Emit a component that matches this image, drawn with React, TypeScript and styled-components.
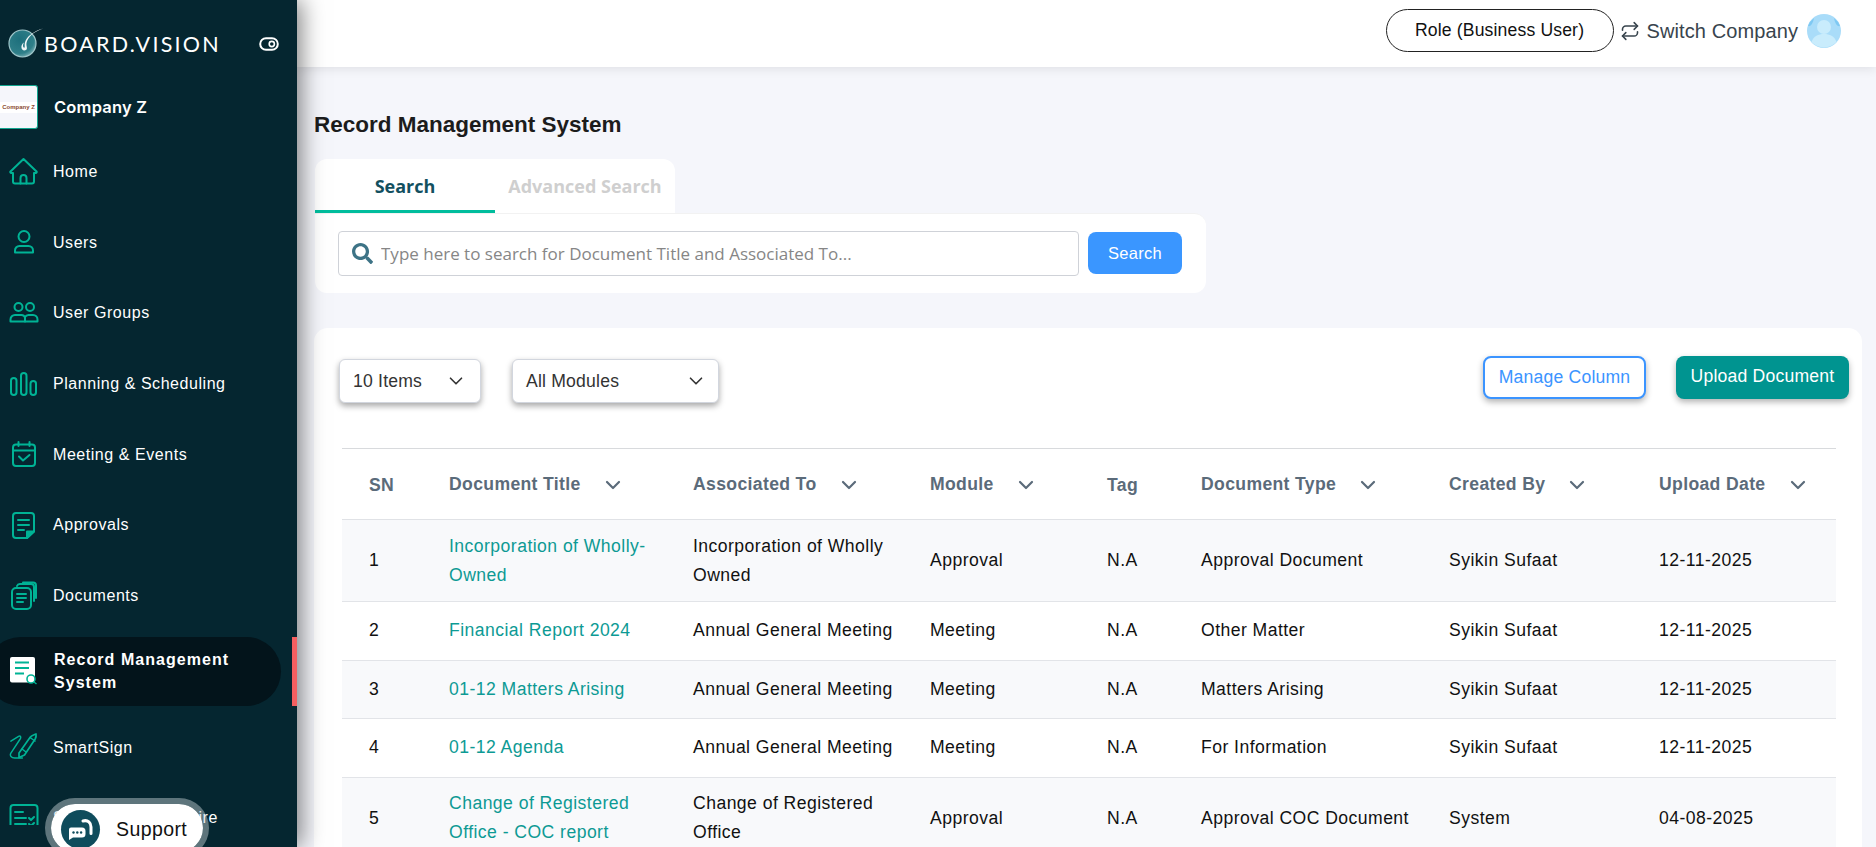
import React from "react";
import styled, { createGlobalStyle } from "styled-components";
import { ChevronDown, Repeat } from "lucide-react";
import { FaSearch } from "react-icons/fa";

const Global = createGlobalStyle`
  html, body { margin: 0; height: 100%; overflow: hidden; background: #f5f6fb; }
  * { box-sizing: border-box; }
  body { font-family: "Liberation Sans", Arial, sans-serif; }
`;

const Page = styled.div`
  display: flex;
  height: 100vh;
  overflow: hidden;
  position: relative;
`;

const Sidebar = styled.aside`
  flex: none;
  width: 297px;
  height: 100%;
  background: #052630;
  color: #fff;
  position: relative;
  z-index: 5;
  box-shadow: 4px 0 22px rgba(0, 0, 0, 0.5);
`;

const Brand = styled.div`
  height: 85px;
  display: flex;
  align-items: flex-start;
  padding: 26px 18px 0 7px;
`;

const BrandName = styled.span`
  font-family: "Lato", sans-serif;
  font-size: 21.5px;
  line-height: 36px;
  letter-spacing: 2.25px;
  margin-left: -1px;
  flex: 1;
`;

const ToggleBox = styled.span`
  display: flex;
  margin-top: 10px;
`;

const CompanyRow = styled.div`
  display: flex;
  align-items: center;
  height: 44px;
  margin-bottom: 7px;
`;

const CompanyLogo = styled.div`
  width: 38px;
  height: 44px;
  display: flex;
  align-items: center;
  background: #f5f6fb;
  border: 1px solid #11a58f;
  border-left: none;
  border-radius: 0 3px 3px 0;
`;

const CompanyLogoText = styled.span`
  display: block;
  width: 100%;
  background: #fff;
  color: #8c4a2f;
  font-size: 6px;
  font-weight: 700;
  line-height: 11px;
  text-align: center;
  white-space: nowrap;
`;

const CompanyName = styled.span`
  margin-left: 16px;
  font-family: "Inter", sans-serif;
  font-weight: 600;
  font-size: 16.5px;
  letter-spacing: 0.2px;
`;

const Nav = styled.nav`
  height: 689px;
  overflow: hidden;
`;

const NavItem = styled.div<{ $active?: boolean }>`
  display: flex;
  align-items: center;
  position: relative;
  height: ${(p) => (p.$active ? "69px" : "70.7px")};
  width: ${(p) => (p.$active ? "295px" : "100%")};
  margin: ${(p) => (p.$active ? "6px 0 6px -14px" : "0")};
  padding-left: ${(p) => (p.$active ? "23px" : "9px")};
  border-radius: ${(p) => (p.$active ? "35px" : "0")};
  background: ${(p) => (p.$active ? "#03141b" : "transparent")};
  ${(p) =>
    p.$active &&
    `&::after {
      content: "";
      position: absolute;
      left: 306px;
      top: 0;
      width: 5px;
      height: 100%;
      background: #f55f60;
    }`}
`;

const NavIcon = styled.span`
  flex: none;
  width: 30px;
  height: 30px;
  display: flex;
`;

const NavLabel = styled.span<{ $active?: boolean }>`
  margin-left: ${(p) => (p.$active ? "15px" : "14px")};
  font-size: 16px;
  line-height: 23px;
  letter-spacing: ${(p) => (p.$active ? "1.05px" : "0.55px")};
  font-weight: ${(p) => (p.$active ? 700 : 400)};
  width: ${(p) => (p.$active ? "200px" : "auto")};
  white-space: ${(p) => (p.$active ? "normal" : "nowrap")};
`;

const Support = styled.div`
  position: absolute;
  left: 45px;
  top: 798px;
  width: 164px;
  height: 60px;
  display: flex;
  align-items: flex-start;
  padding: 6px 0 0 10px;
  background: #fff;
  background-clip: padding-box;
  border: 6px solid rgba(205, 215, 218, 0.45);
  border-radius: 30px;
  z-index: 6;
`;

const SupportDot = styled.span`
  flex: none;
  width: 39px;
  height: 39px;
  border-radius: 50%;
  background: #0f4c5c;
  display: flex;
  align-items: center;
  justify-content: center;
`;

const SupportText = styled.span`
  margin-left: 16px;
  font-size: 19.5px;
  line-height: 39px;
  color: #111;
  letter-spacing: 0.4px;
`;

const Main = styled.main`
  flex: 1;
  min-width: 0;
  height: 100%;
  overflow: hidden;
  background: #f5f6fb;
`;

const TopBar = styled.header`
  height: 67px;
  background: #fff;
  box-shadow: 0 2px 10px rgba(0, 0, 0, 0.09);
  display: flex;
  align-items: flex-start;
  justify-content: flex-end;
  padding: 9px 35px 0 0;
`;

const RoleButton = styled.button`
  width: 228px;
  height: 43px;
  border: 1px solid #222;
  border-radius: 22px;
  background: #fff;
  color: #111;
  font: 17.6px "Liberation Sans", Arial, sans-serif;
  letter-spacing: 0.15px;
`;

const SwitchCompany = styled.div`
  display: flex;
  align-items: center;
  height: 44px;
  margin-left: 6px;
  color: #38444d;
  font-size: 20px;
`;

const SwitchText = styled.span`
  margin-left: 7px;
  margin-right: 9px;
  letter-spacing: 0.1px;
`;

const Content = styled.div`
  padding: 0 14px 0 17px;
`;

const Title = styled.h1`
  margin: 0;
  padding-top: 44px;
  height: 92px;
  font-size: 22.5px;
  line-height: 28px;
  font-weight: 700;
  color: #1c1c1c;
`;

const Tabs = styled.div`
  display: flex;
  width: 360px;
  height: 54px;
  margin-left: 1px;
  background: #fff;
  border-radius: 12px 12px 0 0;
`;

const Tab = styled.div<{ $active?: boolean }>`
  width: 180px;
  height: 54px;
  padding-top: 12px;
  font-family: "Open Sans", sans-serif;
  font-weight: 700;
  font-size: 18px;
  line-height: 30px;
  text-align: center;
  color: ${(p) => (p.$active ? "#13505f" : "#cfcfcf")};
  border-bottom: 3px solid ${(p) => (p.$active ? "#00bd9d" : "transparent")};
`;

const SearchCard = styled.div`
  width: 891px;
  height: 80px;
  margin-left: 1px;
  background: #fff;
  border-radius: 0 12px 12px 12px;
  border-top: 1px solid #f2f2f2;
  padding: 17px 24px 0 23px;
  display: flex;
  align-items: flex-start;
`;

const SearchField = styled.div`
  width: 741px;
  height: 45px;
  border: 1px solid #cfd2d8;
  border-radius: 4px;
  display: flex;
  align-items: center;
  padding-left: 13px;
  color: #3d7386;
`;

const SearchInput = styled.input`
  flex: 1;
  border: none;
  outline: none;
  background: transparent;
  margin-left: 6px;
  font: 17px "Open Sans", sans-serif;
  &::placeholder {
    color: #868686;
    opacity: 1;
  }
`;

const SearchButton = styled.button`
  width: 94px;
  height: 42px;
  margin: 1px 0 0 9px;
  border: none;
  border-radius: 8px;
  background: #3a96ff;
  color: #fff;
  font: 16.5px "Liberation Sans", Arial, sans-serif;
  letter-spacing: 0.3px;
`;

const TableCard = styled.section`
  margin-top: 35px;
  background: #fff;
  border-radius: 14px 14px 0 0;
  padding-left: 28px;
  padding-right: 26px;
  height: 600px;
`;

const Toolbar = styled.div`
  height: 120px;
  margin: 0 -13px 0 -3px;
  padding-top: 28px;
  display: flex;
  align-items: flex-start;
  justify-content: space-between;
`;

const ToolGroup = styled.div`
  display: flex;
  align-items: flex-start;
`;

const Select = styled.div<{ $width: number; $pr: number }>`
  width: ${(p) => p.$width}px;
  height: 44px;
  margin: 3px 31px 0 0;
  padding: 0 ${(p) => p.$pr}px 0 13px;
  display: flex;
  align-items: center;
  justify-content: space-between;
  background: #fff;
  border: 1px solid #d2d6de;
  border-radius: 6px;
  box-shadow: 0 3px 6px rgba(0, 0, 0, 0.35);
  color: #333;
  font-size: 17.6px;
  letter-spacing: 0.2px;
`;

const OutlineButton = styled.button`
  width: 163px;
  height: 43px;
  border: 2px solid #3b94ff;
  border-radius: 8px;
  background: #fff;
  color: #3b94ff;
  font: 17.6px "Liberation Sans", Arial, sans-serif;
  letter-spacing: 0.2px;
  box-shadow: 0 3px 6px rgba(0, 0, 0, 0.3);
`;

const SolidButton = styled.button`
  width: 173px;
  height: 43px;
  margin-left: 30px;
  padding-bottom: 3px;
  border: none;
  border-radius: 8px;
  background: #009490;
  color: #fff;
  font: 17.6px "Liberation Sans", Arial, sans-serif;
  letter-spacing: 0.2px;
  box-shadow: 0 3px 6px rgba(0, 0, 0, 0.3);
`;

const Table = styled.table`
  width: 1494px;
  table-layout: fixed;
  border-collapse: collapse;
`;

const Col = styled.col<{ $w: number }>`
  width: ${(p) => p.$w}px;
`;

const Th = styled.th`
  height: 71px;
  padding: 3px 0 0 27px;
  text-align: left;
  white-space: nowrap;
  font-size: 17.6px;
  font-weight: 700;
  letter-spacing: 0.35px;
  color: #5b6b7a;
  border-top: 1px solid #d8dadd;
  border-bottom: 1px solid #e0e2e6;
`;

const HeadChevron = styled(ChevronDown)`
  vertical-align: middle;
  margin-left: 20px;
  margin-top: -2px;
`;

const Tr = styled.tr`
  &:nth-child(odd) {
    background: #f8f9fb;
  }
  border-bottom: 1px solid #e2e4e8;
`;

const Td = styled.td`
  height: 58.5px;
  padding: 11.5px 10px 11.5px 27px;
  font-size: 17.6px;
  line-height: 29px;
  letter-spacing: 0.45px;
  color: #111;
`;

const DocLink = styled.a`
  color: #0d9a94;
  text-decoration: none;
`;

const stroke = "#00b395";

const IconSvg: React.FC<{ children: React.ReactNode }> = ({ children }) => (
  <svg width="30" height="30" viewBox="0 0 30 30" fill="none" stroke={stroke} strokeWidth="2" strokeLinecap="round" strokeLinejoin="round">
    {children}
  </svg>
);

const icons: Record<string, React.ReactNode> = {
  Home: (
    <IconSvg>
      <path d="M1.500 15.500 14.500 3 27.500 15.500c.5.6 0 1.500-.8 1.500H25v8.500a2 2 0 0 1-2 2H6a2 2 0 0 1-2-2V17H2.300c-.8 0-1.300-.9-.8-1.500Z" />
      <path d="M11.500 27.500V22a3 3 0 0 1 6 0v5.500" />
    </IconSvg>
  ),
  Users: (
    <IconSvg>
      <circle cx="15" cy="9.500" r="5.500" />
      <path d="M6 25.500v-2a4.500 4.500 0 0 1 4.500-4.500h9a4.500 4.500 0 0 1 4.500 4.500v2Z" />
    </IconSvg>
  ),
  Groups: (
    <IconSvg>
      <circle cx="9.500" cy="9" r="4" />
      <circle cx="21" cy="9" r="4" />
      <path d="M1.500 23.500v-2a4.500 4.500 0 0 1 4.500-4.500h6.500a4 4 0 0 1 3.500 2.500v4Z" />
      <path d="M16 19a4 4 0 0 1 3.500-2H24a4.500 4.500 0 0 1 4.500 4.500v2H16" />
    </IconSvg>
  ),
  Planning: (
    <IconSvg>
      <rect x="2" y="10" width="5.500" height="17" rx="2.750" />
      <rect x="12" y="5" width="5.500" height="22" rx="2.750" />
      <rect x="21.500" y="13" width="5.500" height="14" rx="2.750" />
    </IconSvg>
  ),
  Meeting: (
    <IconSvg>
      <rect x="4" y="5.500" width="22" height="21.500" rx="3" />
      <path d="M4 11.500h22M9.500 3v4M20.500 3v4" />
      <path d="m10 17.500 4 4 6.500-5.500" />
    </IconSvg>
  ),
  Approvals: (
    <IconSvg>
      <path d="M18 28H7a3 3 0 0 1-3-3V6a3 3 0 0 1 3-3h15a3 3 0 0 1 3 3v15.500Z" />
      <path d="M9 10h11M9 15h11M9 20h6" />
      <path d="M18 28v-6.500h7Z" fill={stroke} />
    </IconSvg>
  ),
  Documents: (
    <IconSvg>
      <rect x="3" y="8" width="19" height="21" rx="4" />
      <path d="M8 14h9M8 18h9M8 22h6" />
      <path d="M8 6a3 3 0 0 1 3-2h11a3 3 0 0 1 3 3v14" />
      <path d="M14 2.500h10a3 3 0 0 1 3 3V18" />
    </IconSvg>
  ),
  Record: (
    <svg width="30" height="30" viewBox="0 0 30 30">
      <rect x="1" y="1" width="25" height="25.500" rx="2" fill="#fff" />
      <path d="M6 6.500h14M6 12h14M6 17.500h9" stroke="#00b395" strokeWidth="2.200" />
      <circle cx="22" cy="23" r="4" fill="#fff" stroke="#00b395" strokeWidth="1.600" />
      <path d="m25 26 2.500 2" stroke="#00b395" strokeWidth="1.400" />
    </svg>
  ),
  Sign: (
    <IconSvg>
      <path d="M3 8.500 11 3.500c2-1 3 .8 1.500 3L3 21c-1.500 2.500.5 5 4 5h8" transform="translate(-1 1) scale(.96)" strokeWidth="1.500" />
      <path d="M10 21 21 5.500c.8-1.200 2-2 3.500-2.500l2.500-1c.3 1.500 0 3.500-.8 5L15.500 23 10 25.500Z" strokeWidth="1.700" />
      <path d="m21 5.500 5 3.500M13 17l4 3" strokeWidth="1.500" />
    </IconSvg>
  ),
  Questionnaire: (
    <IconSvg>
      <rect x="1.500" y="2" width="27" height="26" rx="3" />
      <path d="M6 9h8M6 15h11M6 21h11M20 15l2 2 3-3M20 21l2 2 3-3" />
    </IconSvg>
  ),
};

const navItems = [
  { label: "Home", icon: "Home" },
  { label: "Users", icon: "Users" },
  { label: "User Groups", icon: "Groups" },
  { label: "Planning & Scheduling", icon: "Planning" },
  { label: "Meeting & Events", icon: "Meeting" },
  { label: "Approvals", icon: "Approvals" },
  { label: "Documents", icon: "Documents" },
  { label: "Record Management System", icon: "Record", active: true },
  { label: "SmartSign", icon: "Sign" },
  { label: "Survey Questionnaire", icon: "Questionnaire" },
];

const columns: [string, number, boolean][] = [
  ["SN", 80, false],
  ["Document Title", 244, true],
  ["Associated To", 237, true],
  ["Module", 177, true],
  ["Tag", 94, false],
  ["Document Type", 248, true],
  ["Created By", 210, true],
  ["Upload Date", 204, true],
];

const rows = [
  ["1", "Incorporation of Wholly-Owned", "Incorporation of Wholly Owned", "Approval", "N.A", "Approval Document", "Syikin Sufaat", "12-11-2025"],
  ["2", "Financial Report 2024", "Annual General Meeting", "Meeting", "N.A", "Other Matter", "Syikin Sufaat", "12-11-2025"],
  ["3", "01-12 Matters Arising", "Annual General Meeting", "Meeting", "N.A", "Matters Arising", "Syikin Sufaat", "12-11-2025"],
  ["4", "01-12 Agenda", "Annual General Meeting", "Meeting", "N.A", "For Information", "Syikin Sufaat", "12-11-2025"],
  ["5", "Change of Registered Office - COC report", "Change of Registered Office", "Approval", "N.A", "Approval COC Document", "System", "04-08-2025"],
];

const Logo = () => (
  <svg width="38" height="36" viewBox="0 0 38 36" style={{ flex: "none" }}>
    <defs>
      <radialGradient id="lg" cx="0.4" cy="0.35" r="0.8">
        <stop offset="0" stopColor="#1d6f7c" />
        <stop offset="0.65" stopColor="#2f7f89" />
        <stop offset="1" stopColor="#a9cdd0" />
      </radialGradient>
    </defs>
    <circle cx="15.500" cy="17.500" r="13.500" fill="url(#lg)" stroke="#9fc6ca" strokeWidth="1.200" />
    <path d="M36 2.500C26 6 21 11 19.500 17c-.6 3 1.600 5.500-.5 7-2.200 1.300-4.600-.2-4.600-3 0-2 1-3.600 2.600-4.600-.8 1.500-1.200 3-.8 4.300.3 1 1.300 1.400 1.500.6.2-2-.6-3.800 1.200-7.300C21 10 27 5 36 2.500Z" fill="#f2f7f7" />
  </svg>
);

const Toggle = () => (
  <svg width="20" height="16" viewBox="0 0 20 16" fill="none">
    <rect x="1.200" y="2.200" width="17.600" height="11.600" rx="5.800" stroke="#fff" strokeWidth="2" />
    <circle cx="12.800" cy="8" r="2.600" stroke="#fff" strokeWidth="1.600" />
  </svg>
);

const Avatar = () => (
  <svg width="34" height="34" viewBox="0 0 34 34">
    <circle cx="17" cy="17" r="17" fill="#a9dcf9" />
    <circle cx="17" cy="13" r="7" fill="#c9ecfc" />
    <path d="M4.500 28c2-6 7-8 12.500-8s10.500 2 12.500 8a17 17 0 0 1-25 0Z" fill="#c9ecfc" />
    <path d="M1 12a17 17 0 0 1 6-8c-1 5-3 9-6 8ZM33 12a17 17 0 0 0-6-8c1 5 3 9 6 8Z" fill="#7fc9f3" />
  </svg>
);

const SupportIcon = () => (
  <svg width="26" height="24" viewBox="0 0 26 24" fill="none">
    <path d="M3 9.500h11a3.500 3.500 0 0 1 3.500 3.500v3a3.500 3.500 0 0 1-3.500 3.500H5L1 22V11.500a2 2 0 0 1 2-2Z" fill="#fff" />
    <circle cx="5.500" cy="14.500" r="1.200" fill="#0f4c5c" />
    <circle cx="9.300" cy="14.500" r="1.200" fill="#0f4c5c" />
    <circle cx="13.100" cy="14.500" r="1.200" fill="#0f4c5c" />
    <path d="M15 3c5-1.500 8 2 8 6v6.500" stroke="#fff" strokeWidth="3" strokeLinecap="round" />
  </svg>
);

export default function App() {
  return (
    <Page>
      <Global />
      <Sidebar>
        <Brand>
          <Logo />
          <BrandName>BOARD.VISION</BrandName>
          <ToggleBox>
            <Toggle />
          </ToggleBox>
        </Brand>
        <CompanyRow>
          <CompanyLogo>
            <CompanyLogoText>Company Z</CompanyLogoText>
          </CompanyLogo>
          <CompanyName>Company Z</CompanyName>
        </CompanyRow>
        <Nav>
          {navItems.map((item) => (
            <NavItem key={item.label} $active={item.active}>
              <NavIcon>{icons[item.icon]}</NavIcon>
              <NavLabel $active={item.active}>{item.label}</NavLabel>
            </NavItem>
          ))}
        </Nav>
      </Sidebar>
      <Support>
        <SupportDot>
          <SupportIcon />
        </SupportDot>
        <SupportText>Support</SupportText>
      </Support>
      <Main>
        <TopBar>
          <RoleButton>Role (Business User)</RoleButton>
          <SwitchCompany>
            <Repeat size={20} strokeWidth={1.9} color="#38444d" />
            <SwitchText>Switch Company</SwitchText>
            <Avatar />
          </SwitchCompany>
        </TopBar>
        <Content>
          <Title>Record Management System</Title>
          <Tabs>
            <Tab $active>Search</Tab>
            <Tab>Advanced Search</Tab>
          </Tabs>
          <SearchCard>
            <SearchField>
              <FaSearch size={21} />
              <SearchInput placeholder="Type here to search for Document Title and Associated To..." />
            </SearchField>
            <SearchButton>Search</SearchButton>
          </SearchCard>
          <TableCard>
            <Toolbar>
              <ToolGroup>
                <Select $width={142} $pr={13}>
                  10 Items
                  <ChevronDown size={22} strokeWidth={1.8} color="#333" />
                </Select>
                <Select $width={207} $pr={11}>
                  All Modules
                  <ChevronDown size={22} strokeWidth={1.8} color="#333" />
                </Select>
              </ToolGroup>
              <ToolGroup>
                <OutlineButton>Manage Column</OutlineButton>
                <SolidButton>Upload Document</SolidButton>
              </ToolGroup>
            </Toolbar>
            <Table>
              <colgroup>
                {columns.map(([name, w]) => (
                  <Col key={name} $w={w} />
                ))}
              </colgroup>
              <thead>
                <tr>
                  {columns.map(([name, , sortable]) => (
                    <Th key={name}>
                      {name}
                      {sortable && <HeadChevron size={24} strokeWidth={2.2} color="#5b6b7a" />}
                    </Th>
                  ))}
                </tr>
              </thead>
              <tbody>
                {rows.map((r) => (
                  <Tr key={r[0]}>
                    {r.map((cell, i) => (
                      <Td key={i}>{i === 1 ? <DocLink>{cell}</DocLink> : cell}</Td>
                    ))}
                  </Tr>
                ))}
              </tbody>
            </Table>
          </TableCard>
        </Content>
      </Main>
    </Page>
  );
}
